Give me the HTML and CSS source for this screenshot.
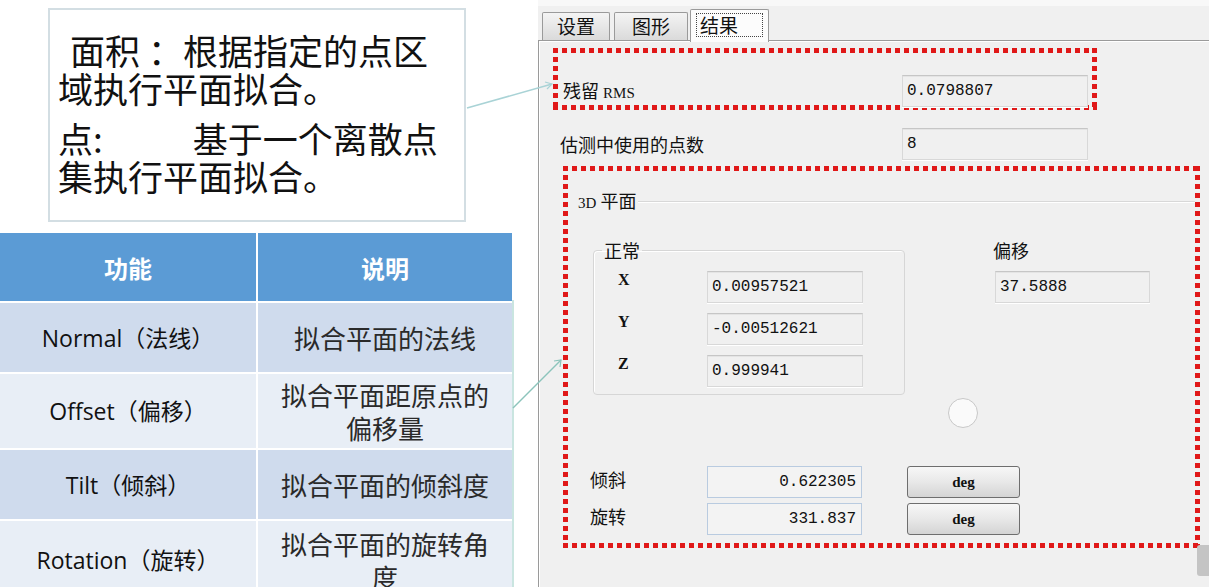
FILE: index.html
```html
<!DOCTYPE html>
<html lang="zh-CN">
<head>
  <meta charset="UTF-8" />
  <title>平面拟合 - 结果</title>
  <link rel="stylesheet" href="styles.css">
</head>
<body>
  <div class="page">
    <div class="left">
      <div class="note">
        <p><span class="indent"></span>面积<span class="sp"></span>：根据指定的点区<br>域执行平面拟合。</p>
        <p>点:<span class="gap"></span>基于一个离散点<br>集执行平面拟合。</p>
      </div>

      <div class="table">
        <div class="th">功能</div>
        <div class="th">说明</div>
        <div class="td dark">Normal（法线）</div>
        <div class="td dark desc">拟合平面的法线</div>
        <div class="td light">Offset（偏移）</div>
        <div class="td light desc">拟合平面距原点的<br>偏移量</div>
        <div class="td dark">Tilt（倾斜）</div>
        <div class="td dark desc">拟合平面的倾斜度</div>
        <div class="td light">Rotation（旋转）</div>
        <div class="td light desc">拟合平面的旋转角<br>度</div>
      </div>
    </div>

    <div class="dialog">
      <div class="tabs">
        <div class="tab tab-set">设置</div>
        <div class="tab tab-graph">图形</div>
        <div class="tab tab-result active"><span>结果</span></div>
      </div>

      <div class="panel">
        <div class="mark mark-rms">
          <div class="field-row">
            <span class="label rms-label">残留 <span class="latin">RMS</span></span>
            <span class="value">0.0798807</span>
          </div>
        </div>

        <div class="field-row count-row">
          <span class="label count-label">估测中使用的点数</span>
          <span class="value">8</span>
        </div>

        <div class="mark mark-plane">
          <div class="group-title">
            <span><span class="latin">3D</span> 平面</span>
            <i class="rule"></i>
          </div>

          <div class="plane-top">
            <fieldset class="normal">
              <legend>正常</legend>
              <div class="axis"><span class="axis-name">X</span><span class="value">0.00957521</span></div>
              <div class="axis"><span class="axis-name">Y</span><span class="value">-0.00512621</span></div>
              <div class="axis"><span class="axis-name">Z</span><span class="value">0.999941</span></div>
            </fieldset>
            <div class="offset">
              <div class="label">偏移</div>
              <span class="value">37.5888</span>
            </div>
          </div>

          <div class="angles">
            <div class="angle-row">
              <span class="label angle-label">倾斜</span>
              <span class="value num">0.622305</span>
              <button class="unit">deg</button>
            </div>
            <div class="angle-row">
              <span class="label angle-label">旋转</span>
              <span class="value num">331.837</span>
              <button class="unit">deg</button>
            </div>
          </div>

          <span class="cursor"></span>
        </div>

        <span class="scroll-tab"></span>
      </div>
    </div>

    <svg class="links" width="1209" height="587" viewBox="0 0 1209 587">
      <line x1="467" y1="108" x2="552" y2="84" stroke="#a9d3d6" stroke-width="1.5" />
      <polyline points="545,82 552,84 547,89" fill="none" stroke="#a9d3d6" stroke-width="1.2" />
      <line x1="513" y1="300" x2="513" y2="587" stroke="#a6d4cc" stroke-width="1.2" />
      <line x1="513" y1="408" x2="561" y2="360" stroke="#8cc4bb" stroke-width="1.5" />
      <polyline points="554,361 561,360 560,367" fill="none" stroke="#8cc4bb" stroke-width="1.2" />
    </svg>
  </div>
</body>
</html>
```

FILE: styles.css
```css
* {
  box-sizing: border-box;
}
body {
  margin: 0;
  background: #fff;
  font-family: "Noto Sans CJK SC", sans-serif;
  color: #111;
}
.page {
  position: relative;
  display: flex;
  width: 1209px;
  height: 587px;
  overflow: hidden;
}

/* left: slide text + table */
.left {
  width: 538px;
  flex: none;
  padding-top: 8px;
  background: #fff;
}
.note {
  margin-left: 48px;
  width: 418px;
  height: 214px;
  border: 2px solid #d3dee3;
  padding: 21px 0 0 8px;
  font-size: 35px;
  line-height: 38px;
  white-space: nowrap;
  color: #111;
}
.note p {
  margin: 0 0 12px;
}
.indent {
  display: inline-block;
  width: 12px;
}
.sp {
  display: inline-block;
  width: 8px;
}
.gap {
  display: inline-block;
  width: 90px;
}
.table {
  margin-top: 11px;
  width: 512px;
  display: grid;
  grid-template-columns: 256px 254px;
  grid-template-rows: 68px 69px 74px 69px 78px;
  gap: 2px;
}
.th {
  display: flex;
  align-items: center;
  justify-content: center;
  background: #5b9bd5;
  color: #fff;
  font-size: 24px;
  font-weight: bold;
}
.td {
  display: flex;
  align-items: center;
  justify-content: center;
  text-align: center;
  font-family: "Open Sans", "Noto Sans CJK SC", sans-serif;
  font-size: 23px;
  line-height: 30px;
  color: #111;
}
.td.desc {
  font-family: "Noto Sans CJK SC", sans-serif;
  font-size: 26px;
  line-height: 33px;
  color: #2a2a2a;
}
.dark {
  background: #cfdbed;
}
.light {
  background: #e8eef6;
}

/* right: dialog */
.dialog {
  position: relative;
  flex: 1;
  display: flex;
  flex-direction: column;
  background: #f0f0f0;
  box-shadow: inset 0 6px 0 #f8f8f8;
}
.tabs {
  height: 40px;
  display: flex;
  align-items: flex-end;
  padding-left: 4px;
}
.tab {
  height: 28px;
  border: 1px solid #9a9a9a;
  border-bottom: none;
  border-radius: 2px 2px 0 0;
  background: linear-gradient(#f4f4f4, #dadada);
  font-size: 19px;
  line-height: 26px;
  text-align: center;
}
.tab-set {
  width: 68px;
}
.tab-graph {
  width: 74px;
  margin-left: 4px;
}
.tab-result {
  width: 79px;
  margin-left: 2px;
}
.tab.active {
  position: relative;
  z-index: 1;
  height: 33px;
  margin-bottom: -2px;
  background: #fcfcfc;
  text-align: left;
}
.tab.active span {
  display: block;
  margin: 3px 5px 0;
  height: 24px;
  padding-left: 3px;
  border: 1px dotted #444;
  line-height: 21px;
}
.panel {
  position: relative;
  flex: 1;
  border-top: 1px solid #9a9a9a;
  border-left: 1px solid #9a9a9a;
  box-shadow: inset 1px 1px 0 #fff;
  font-size: 18px;
  line-height: 20px;
}
.latin {
  font-family: "Liberation Serif", serif;
  font-size: 15px;
}

/* red dotted highlight frames */
.mark {
  position: relative;
  background:
    repeating-linear-gradient(90deg, #e01818 0 5px, transparent 5px 9px) top left / 100% 5px no-repeat,
    repeating-linear-gradient(90deg, #e01818 0 5px, transparent 5px 9px) bottom left / 100% 5px no-repeat,
    repeating-linear-gradient(180deg, #e01818 0 5px, transparent 5px 9px) top left / 5px 100% no-repeat,
    repeating-linear-gradient(180deg, #e01818 0 5px, transparent 5px 9px) top right / 5px 100% no-repeat;
}
.mark-rms {
  margin: 7px 0 0 14px;
  width: 544px;
  height: 62px;
  padding: 27px 0 0 10px;
}
.field-row {
  display: flex;
  align-items: center;
}
.rms-label {
  width: 339px;
}
.count-row {
  margin: 18px 0 0 21px;
}
.count-label {
  width: 342px;
}
.value {
  display: block;
  width: 186px;
  height: 32px;
  padding-left: 4px;
  background: #f0f0f0;
  border: 1px solid #d8d8d8;
  border-top-color: #c6c6c6;
  box-shadow: inset 0 1px 0 #e4e4e4, 0 1px 0 #fff;
  font-family: "Liberation Mono", monospace;
  font-size: 16px;
  line-height: 30px;
  color: #111;
}
.mark-plane {
  display: flex;
  flex-direction: column;
  margin: 6px 0 0 24px;
  width: 637px;
  height: 382px;
  padding: 24px 5px 13px 15px;
}
.group-title {
  display: flex;
  align-items: center;
}
.group-title .rule {
  flex: 1;
  margin-left: 2px;
  border-top: 1px solid #d8d8d8;
  border-bottom: 1px solid #fff;
}
.plane-top {
  display: flex;
  margin-top: 27px;
}
.normal {
  margin: 0 0 0 15px;
  width: 312px;
  height: 155px;
  padding: 11px 0 0 24px;
  border: 1px solid #d6d6d6;
  border-radius: 4px;
  box-shadow: inset 1px 1px 0 #fff;
}
.normal legend {
  margin-left: -16px;
  padding: 0 2px;
  line-height: 20px;
}
.axis {
  display: flex;
  align-items: flex-start;
  margin-bottom: 10px;
}
.axis-name {
  width: 89px;
  font-family: "Liberation Serif", serif;
  font-weight: bold;
  font-size: 16px;
  line-height: 18px;
}
.axis .value {
  width: 156px;
}
.offset {
  margin-left: 88px;
}
.offset .value {
  width: 155px;
  margin: 11px 0 0 2px;
}
.angles {
  margin-top: auto;
  display: flex;
  flex-direction: column;
  gap: 5px;
}
.angle-row {
  display: flex;
  align-items: center;
}
.angle-label {
  width: 117px;
  margin-left: 12px;
  padding-bottom: 6px;
}
.value.num {
  width: 155px;
  padding: 0 5px 0 0;
  text-align: right;
  background: #f3f3f3;
  border-color: #b9cbe0;
  box-shadow: none;
}
.unit {
  width: 113px;
  height: 32px;
  margin-left: 45px;
  border: 1px solid #6e6e6e;
  border-radius: 3px;
  background: linear-gradient(#f7f7f7, #e8e8e8 50%, #d4d4d4);
  font-family: "Liberation Serif", serif;
  font-weight: bold;
  font-size: 15px;
  color: #111;
}
.cursor {
  position: absolute;
  left: 385px;
  top: 232px;
  width: 30px;
  height: 30px;
  border: 1px solid #c8c8c8;
  border-radius: 50%;
  background: #fafafa;
}
.scroll-tab {
  position: absolute;
  right: 0;
  top: 504px;
  width: 12px;
  height: 31px;
  border-radius: 3px 0 0 3px;
  background: #c4c4c4;
}
.links {
  position: absolute;
  left: 0;
  top: 0;
  pointer-events: none;
}
```
